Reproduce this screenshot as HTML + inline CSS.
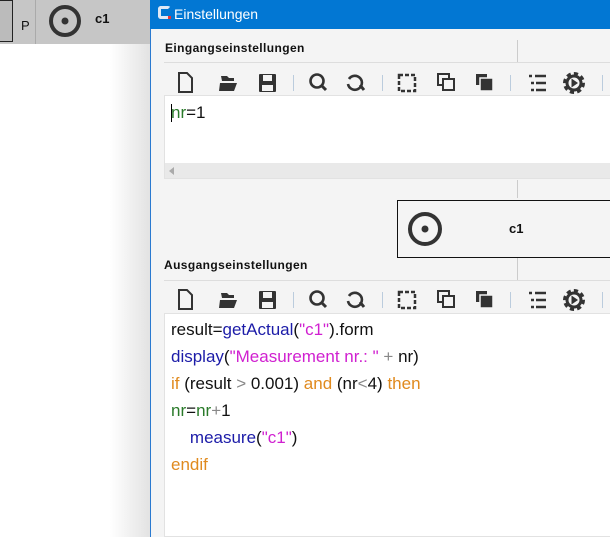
<!DOCTYPE html>
<html><head><meta charset="utf-8"><style>
*{margin:0;padding:0;box-sizing:border-box}
body{width:610px;height:537px;overflow:hidden;background:#fff;font-family:"Liberation Sans",Arial,sans-serif;position:relative}
.abs{position:absolute}
.code{font-size:17px;line-height:27px;color:#111}
.kw{color:#e08a1e}.fn{color:#1c1ca8}.st{color:#d020d0}.var{color:#2a7a2a}.op{color:#888}
</style></head><body>
<div class="abs" style="left:0;top:0;width:151px;height:44px;background:#c6c6c6"></div>
<div class="abs" style="left:0;top:0;width:13px;height:42px;border:1px solid #222;border-left:none;background:#bbb"></div>
<div class="abs" style="left:21px;top:18px;font-size:13px;color:#111">P</div>
<div class="abs" style="left:35px;top:0;width:1px;height:44px;background:#aaa"></div>
<svg class="abs" style="left:47px;top:3px" width="36" height="36"><circle cx="18" cy="18" r="14" fill="none" stroke="#333" stroke-width="4"/><circle cx="18" cy="18" r="3.5" fill="#333"/></svg>
<div class="abs" style="left:95px;top:11px;font-size:13px;font-weight:bold;color:#111">c1</div>
<div class="abs" style="left:110px;top:44px;width:41px;height:493px;background:linear-gradient(to right,#fff,#e2e2e2)"></div>
<div class="abs" style="left:150px;top:0;width:460px;height:537px;background:#f4f4f4;border-left:1px solid #2a7ad0"></div>
<div class="abs" style="left:150px;top:0;width:460px;height:29px;background:#0277d3"></div>
<div class="abs" style="left:158px;top:6px;width:13px;height:13px;border:3px solid #dfe8f5;border-right-color:transparent;border-radius:3px"></div>
<div class="abs" style="left:168px;top:16px;width:3px;height:3px;background:#e33"></div>
<div class="abs" style="left:174px;top:6px;font-size:14px;color:#fff">Einstellungen</div>

<div class="abs" style="left:165px;top:41px;font-size:12px;font-weight:bold;color:#111;letter-spacing:0.4px">Eingangseinstellungen</div>
<div class="abs" style="left:164px;top:62px;width:446px;height:1px;background:#ddd"></div>
<div class="abs" style="left:517px;top:40px;width:1px;height:22px;background:#ccc"></div>

<svg class="abs" style="left:164px;top:66px" width="446" height="30" fill="#333" stroke="#333">
<g id="tb">
<path d="M15 7h8l5 5v14h-13z" fill="none" stroke-width="2"/>
<path d="M57 10h6l2 2h5v3h-12zM56 17h17l-3 8h-15z" stroke="none"/>
<rect x="95" y="8" width="17" height="18" rx="1" stroke="none"/><rect x="99" y="9" width="9" height="6" fill="#f4f4f4" stroke="none"/><rect x="98" y="19" width="11" height="6" fill="#f4f4f4" stroke="none"/>
<rect x="129" y="9" width="1" height="16" fill="#bcd" stroke="none"/>
<circle cx="153" cy="15" r="6.5" fill="none" stroke-width="2.6"/><path d="M157 19l5 5" stroke-width="3"/>
<path d="M185 13a7 7 0 1 1 -1 5" fill="none" stroke-width="2.6"/><path d="M196 19l4 5" stroke-width="3"/>
<rect x="218" y="9" width="1" height="16" fill="#bcd" stroke="none"/>
<rect x="235" y="9" width="16" height="16" fill="none" stroke-width="2.5" stroke-dasharray="4 2"/>
<rect x="274" y="8" width="11" height="11" fill="none" stroke-width="2"/><rect x="279" y="13" width="11" height="11" fill="#f4f4f4" stroke-width="2"/>
<rect x="312" y="8" width="11" height="11" stroke="none"/><rect x="316" y="12" width="13" height="13" fill="#333" stroke="#f4f4f4" stroke-width="1.5"/>
<rect x="346" y="9" width="1" height="16" fill="#bcd" stroke="none"/>
<path d="M365 10h3M371 10h11M367 17h3M372 17h10M367 24h3M372 24h10" stroke-width="2.4"/>
<circle cx="410" cy="17" r="9" fill="none" stroke-width="4" stroke-dasharray="4 3"/><circle cx="410" cy="17" r="7" fill="none" stroke-width="3"/><path d="M407.5 12.5v9l6.5-4.5z" stroke="none"/>
<rect x="438" y="9" width="1" height="16" fill="#bcd" stroke="none"/>
</g></svg>

<div class="abs" style="left:164px;top:95px;width:446px;height:84px;background:#fff;border:1px solid #e2e2e2;border-right:none"></div>
<div class="abs" style="left:165px;top:163px;width:445px;height:15px;background:#e9e9e9"></div>
<div class="abs" style="left:169px;top:167px;width:0;height:0;border-top:4px solid transparent;border-bottom:4px solid transparent;border-right:5px solid #aaa"></div>
<div class="abs code" style="left:171px;top:99px"><span class="var">nr</span>=1</div>
<div class="abs" style="left:171px;top:104px;width:1px;height:18px;background:#000"></div>

<div class="abs" style="left:517px;top:180px;width:1px;height:18px;background:#ccc"></div>
<div class="abs" style="left:517px;top:258px;width:1px;height:22px;background:#ccc"></div>
<div class="abs" style="left:397px;top:200px;width:220px;height:58px;border:1px solid #111;background:#f4f4f4"></div>
<svg class="abs" style="left:406px;top:210px" width="38" height="38"><circle cx="19" cy="19" r="15" fill="none" stroke="#333" stroke-width="4"/><circle cx="19" cy="19" r="3.5" fill="#333"/></svg>
<div class="abs" style="left:509px;top:221px;font-size:13px;font-weight:bold;color:#111">c1</div>

<div class="abs" style="left:164px;top:258px;font-size:12px;font-weight:bold;color:#111;letter-spacing:0.4px">Ausgangseinstellungen</div>
<div class="abs" style="left:164px;top:280px;width:446px;height:1px;background:#ddd"></div>

<svg class="abs" style="left:164px;top:283px" width="446" height="30" fill="#333" stroke="#333"><use href="#tb"/></svg>

<div class="abs" style="left:164px;top:313px;width:446px;height:224px;background:#fff;border:1px solid #e2e2e2;border-right:none"></div>
<div class="abs code" style="left:171px;top:316px;white-space:pre">result=<span class="fn">getActual</span>(<span class="st">"c1"</span>).form
<span class="fn">display</span>(<span class="st">"Measurement nr.: "</span> <span class="op">+</span> nr)
<span class="kw">if</span> (result <span class="op">&gt;</span> 0.001) <span class="kw">and</span> (nr<span class="op">&lt;</span>4) <span class="kw">then</span>
<span class="var">nr</span>=<span class="var">nr</span><span class="op">+</span>1
    <span class="fn">measure</span>(<span class="st">"c1"</span>)
<span class="kw">endif</span></div>
</body></html>
